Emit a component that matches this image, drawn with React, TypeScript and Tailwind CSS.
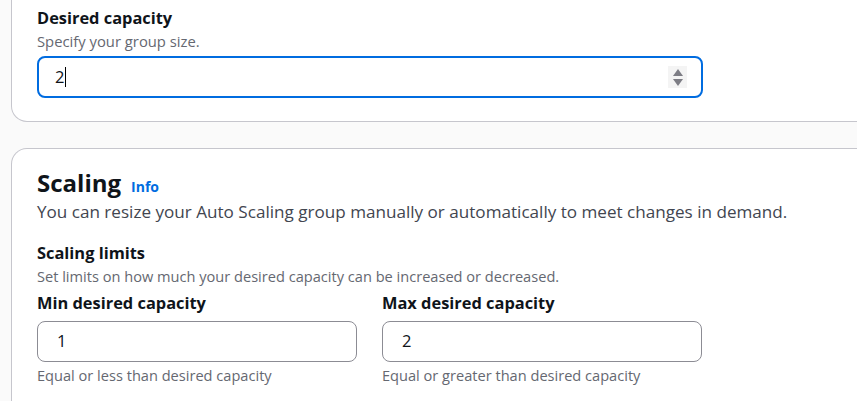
import React from 'react';

const font = { fontFamily: '"Open Sans", "Noto Sans", Arial, sans-serif' };

const Spinner = () => (
  <div className="flex h-[22px] w-[19px] flex-col items-center justify-center gap-[3px] bg-[#f4f4f4]">
    <svg width="10" height="7" viewBox="0 0 10 7">
      <path d="M5 0 L10 7 L0 7 Z" fill="#7d7d85" />
    </svg>
    <svg width="10" height="7" viewBox="0 0 10 7">
      <path d="M0 0 L10 0 L5 7 Z" fill="#7d7d85" />
    </svg>
  </div>
);

const LimitField = ({ label, value, hint }: { label: string; value: string; hint: string }) => (
  <div className="flex w-[320px] flex-col">
    <div className="text-[16.4px] font-bold leading-[22px] text-[#0f141a]">{label}</div>
    <div className="mt-[7px] flex h-[41px] items-center rounded-[8px] border border-[#8c8c94] bg-white px-[19px] text-[16.5px] text-[#0f141a]">
      {value}
    </div>
    <div className="mt-[3px] text-[14.6px] leading-[20px] text-[#656871]">{hint}</div>
  </div>
);

export default function App() {
  return (
    <div className="h-[401px] w-[857px] overflow-hidden bg-[#fafafa]" style={font}>
      <div className="ml-[11px] w-[900px] rounded-b-[16px] border-x border-b border-[#c6c6cd] bg-white pb-[23px] pl-[25px] pt-[7px]">
        <div className="text-[16.4px] font-bold leading-[22px] text-[#0f141a]">Desired capacity</div>
        <div className="mt-[2px] text-[14.8px] leading-[20px] text-[#656871]">Specify your group size.</div>
        <div className="mt-[5px] flex h-[42px] w-[666px] items-center justify-between rounded-[8px] border-2 border-[#006ce0] bg-white pl-[16px] pr-[14px] text-[16.5px] text-[#0f141a]">
          <span className="flex items-center">
            2<span className="ml-[1px] inline-block h-[20px] w-[1px] bg-black" />
          </span>
          <Spinner />
        </div>
      </div>

      <div className="ml-[11px] mt-[26px] w-[900px] rounded-t-[16px] border-x border-t border-[#c6c6cd] bg-white pb-[40px] pl-[25px] pt-[18px]">
        <div className="flex items-baseline gap-[10px]">
          <h2 className="text-[24px] font-bold leading-[32px] text-[#0f141a]">Scaling</h2>
          <a className="text-[14px] font-bold text-[#006ce0]">Info</a>
        </div>
        <p className="mt-[2px] text-[17.1px] leading-[22px] text-[#424650]">
          You can resize your Auto Scaling group manually or automatically to meet changes in demand.
        </p>
        <div className="mt-[19px] text-[16.4px] font-bold leading-[22px] text-[#0f141a]">Scaling limits</div>
        <div className="mt-[2px] text-[14.6px] leading-[20px] text-[#656871]">
          Set limits on how much your desired capacity can be increased or decreased.
        </div>
        <div className="mt-[6px] flex gap-[25px]">
          <LimitField label="Min desired capacity" value="1" hint="Equal or less than desired capacity" />
          <LimitField label="Max desired capacity" value="2" hint="Equal or greater than desired capacity" />
        </div>
      </div>
    </div>
  );
}
